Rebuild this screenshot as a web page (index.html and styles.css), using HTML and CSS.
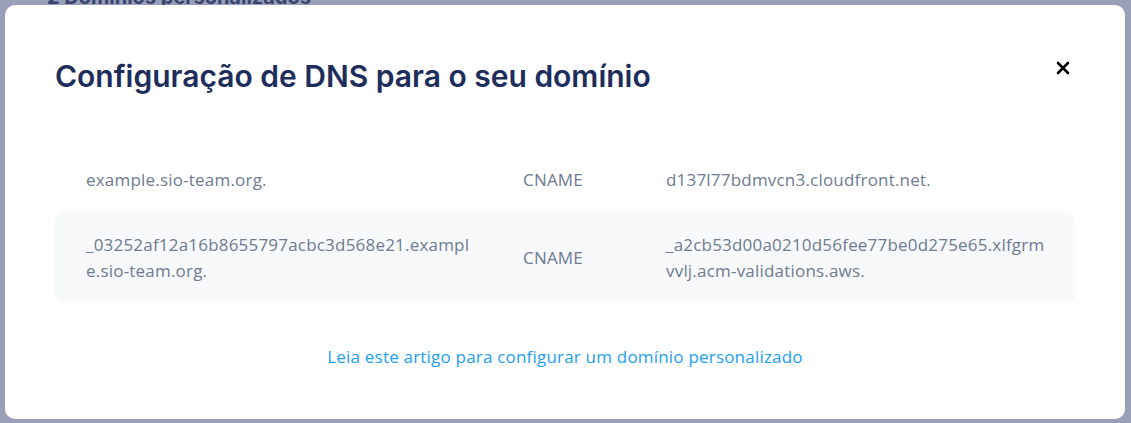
FILE: index.html
```html
<!DOCTYPE html>
<html lang="pt">
<head>
    <meta charset="UTF-8">
    <meta name="viewport" content="width=device-width, initial-scale=1.0">
    <title>Domínios personalizados</title>
    <link rel="stylesheet" href="styles.css">
</head>
<body>

    <div class="page">
        <h2 class="page-title">2 Domínios personalizados</h2>
    </div>

    <div class="overlay">
        <div class="modal">
            <div class="modal-header">
                <h1>Configuração de DNS para o seu domínio</h1>
                <button class="close" type="button" aria-label="Fechar">
                    <svg width="14" height="14" viewBox="0 0 14 14">
                        <path d="M2 2 L12 12 M12 2 L2 12" stroke="#000" stroke-width="2.6" stroke-linecap="round"/>
                    </svg>
                </button>
            </div>

            <div class="records">
                <div class="record">
                    <span class="name">example.sio-team.org.</span>
                    <span class="type">CNAME</span>
                    <span class="value">d137l77bdmvcn3.cloudfront.net.</span>
                </div>
                <div class="record alt">
                    <span class="name">_03252af12a16b8655797acbc3d568e21.example.sio-team.org.</span>
                    <span class="type">CNAME</span>
                    <span class="value">_a2cb53d00a0210d56fee77be0d275e65.xlfgrmvvlj.acm-validations.aws.</span>
                </div>
            </div>

            <a class="help-link" href="#">Leia este artigo para configurar um domínio personalizado</a>
        </div>
    </div>

</body>
</html>
```

FILE: styles.css
```css
body {
    margin: 0;
    padding: 0;
    background-color: #f4f6fa;
    font-family: "Open Sans", Arial, sans-serif;
    overflow: hidden;
}
.page {
    height: 423px;
    padding: 0 47px;
}
.page-title {
    margin: -15px 0 0;
    font-family: Inter, sans-serif;
    font-size: 20px;
    font-weight: 700;
    color: #1d2d5c;
}
.overlay {
    position: fixed;
    top: 0;
    left: 0;
    right: 0;
    bottom: 0;
    background-color: rgba(76, 88, 128, 0.55);
    padding: 5px 6px 4px 5px;
}
.modal {
    background-color: #fff;
    border-radius: 10px;
    padding: 53px 50px 49px;
    display: flex;
    flex-direction: column;
}
.modal-header {
    display: flex;
    justify-content: space-between;
    align-items: flex-start;
}
.modal-header h1 {
    margin: 0;
    font-family: Inter, sans-serif;
    font-size: 30px;
    line-height: 36px;
    font-weight: 600;
    color: #1d2d5c;
}
.close {
    border: none;
    background: none;
    padding: 0;
    margin: 3px 5px 0 0;
    cursor: pointer;
    line-height: 0;
}
.records {
    margin-top: 53px;
}
.record {
    display: grid;
    grid-template-columns: 437px 143px 1fr;
    align-items: center;
    padding: 20px 31px 19px;
    font-size: 17px;
    letter-spacing: 0.2px;
    line-height: 26px;
    color: #6e7b91;
    border-radius: 8px;
}
.record.alt {
    background-color: #f8f9fb;
}
.record .name {
    word-break: break-all;
    padding-right: 50px;
}
.record .value {
    word-break: break-all;
    margin-right: -4px;
}
.help-link {
    margin-top: 41px;
    align-self: center;
    font-size: 17px;
    letter-spacing: 0.2px;
    line-height: 26px;
    color: #1ca0f2;
    text-decoration: none;
}
```
